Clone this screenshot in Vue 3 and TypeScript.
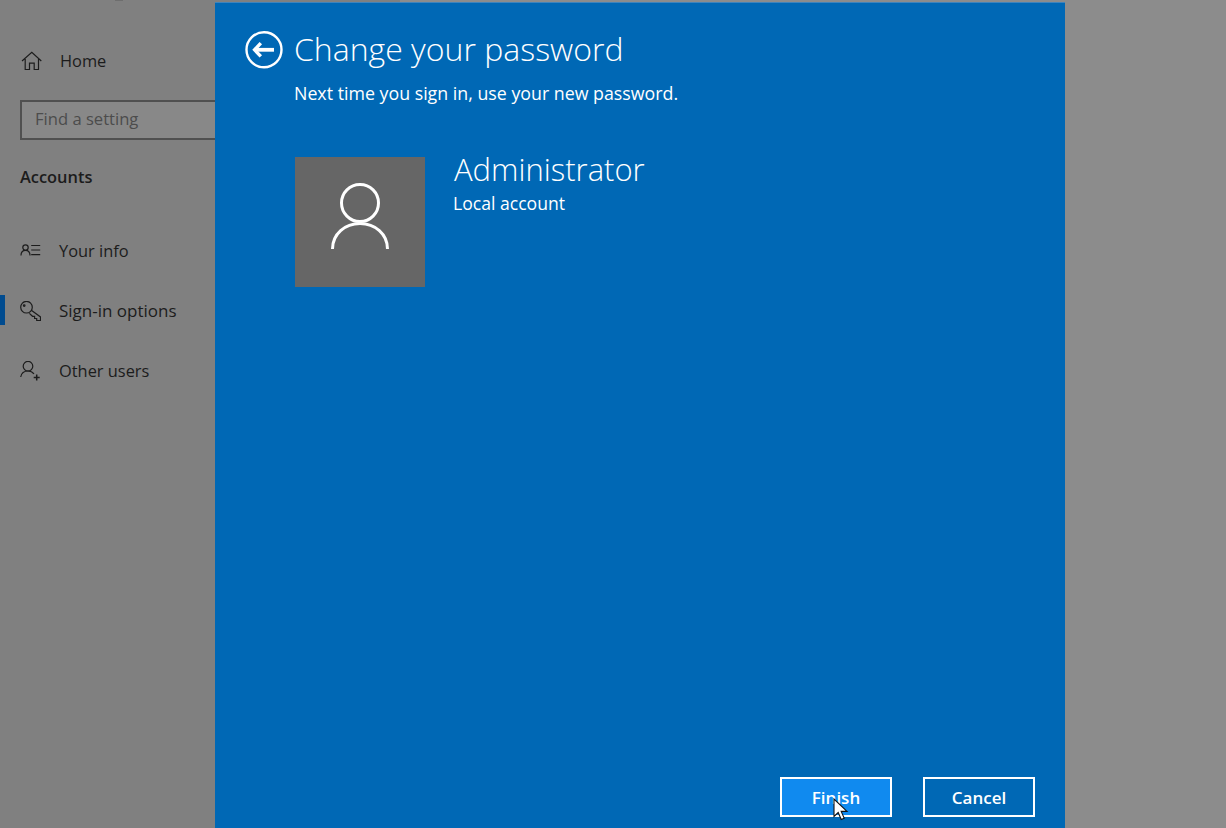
<script setup lang="ts">
const items = [
  { id: 'info', label: 'Your info', active: false },
  { id: 'key', label: 'Sign-in options', active: true },
  { id: 'add', label: 'Other users', active: false },
]
</script>

<template>
  <div class="page">
    <aside class="side">
      <span class="speck"></span>
      <div class="home">
        <svg class="ico" width="21" height="20" viewBox="0 0 21 20" fill="none" stroke="#1c1c1c" stroke-width="1.2">
          <path d="M1 10 10.8 1.3 20.3 10M4.2 8v10.5h4.3V12.2h4.7v6.3h4.3V8" />
        </svg>
        <span class="label">Home</span>
      </div>
      <div class="search">Find a setting</div>
      <div class="heading">Accounts</div>
      <nav class="nav">
        <div v-for="item in items" :key="item.id" class="row" :class="{ active: item.active }">
          <span v-if="item.active" class="mark"></span>
          <svg v-if="item.id === 'info'" class="ico" width="21" height="20" viewBox="0 0 21 20" fill="none" stroke="#1c1c1c" stroke-width="1.2">
            <circle cx="5.5" cy="6.6" r="2.7" />
            <path d="M1 14.4c0-3.6 2-5.1 4.5-5.1s4.5 1.5 4.5 5.1M11.2 4.5h9M11.2 9h9M11.2 13.6h9" />
          </svg>
          <svg v-else-if="item.id === 'key'" class="ico" width="21" height="21" viewBox="0 0 21 21" fill="none" stroke="#1c1c1c" stroke-width="1.2">
            <circle cx="6.5" cy="6.2" r="5.8" />
            <circle cx="4.2" cy="4.6" r=".8" />
            <path d="m11.3 9.3 9.2 6.6v3.6h-3.8v-2h-2.1v-2.2h-2.1l-3.1-2.9" />
          </svg>
          <svg v-else class="ico" width="21" height="21" viewBox="0 0 21 21" fill="none" stroke="#1c1c1c" stroke-width="1.2">
            <circle cx="8" cy="5.2" r="4.8" />
            <path d="M.7 16C1.4 12.2 4 10 8 10c2.5 0 4.5 1 6 3" />
            <path d="M16.7 13.6v6M13.7 16.6h6" stroke-width="1.5" />
          </svg>
          <span class="label">{{ item.label }}</span>
        </div>
      </nav>
    </aside>

    <main class="dialog">
      <header class="head">
        <svg class="back" width="38" height="38" viewBox="0 0 38 38" fill="none">
          <circle cx="19" cy="18.8" r="17.5" stroke="#fff" stroke-width="2.4" />
          <path d="M29 18.8H11" stroke="#fff" stroke-width="3.8" />
          <path d="M15.8 12.2 9.6 18.8l6.2 6.6" stroke="#fff" stroke-width="3.4" />
        </svg>
        <div>
          <h1>Change your password</h1>
          <p class="sub">Next time you sign in, use your new password.</p>
        </div>
      </header>

      <section class="account">
        <div class="avatar">
          <svg width="60" height="66" viewBox="0 0 60 66" fill="none" stroke="#fff" stroke-width="3">
            <circle cx="30" cy="20" r="18.5" />
            <path d="M2.5 66C2.5 51 15 40.5 30 40.5S57.5 51 57.5 66" />
          </svg>
        </div>
        <div class="who">
          <div class="name">Administrator</div>
          <div class="type">Local account</div>
        </div>
      </section>

      <footer class="actions">
        <button class="btn hover" type="button">Finish</button>
        <button class="btn" type="button">Cancel</button>
        <svg class="cursor" width="16" height="24" viewBox="0 0 16 24">
          <path d="M1 1v17.5l4.2-4 3 7 3-1.3-3-6.8h5.8Z" fill="#fff" stroke="#111" stroke-width="1.1" />
        </svg>
      </footer>
    </main>
  </div>
</template>

<style>
html, body { margin: 0; overflow: hidden; background: #8c8c8c; }
</style>

<style scoped>
.page {
  position: relative;
  width: 1226px;
  height: 828px;
  overflow: hidden;
  background: #8c8c8c;
  font-family: "Open Sans", "Noto Sans", sans-serif;
}
.side {
  position: relative;
  width: 400px;
  height: 100%;
  background: #808080;
  color: #1c1c1c;
  font-size: 16.4px;
  display: flex;
  flex-direction: column;
  box-sizing: border-box;
  padding-top: 50px;
}
.speck {
  position: absolute;
  left: 115px;
  top: 0;
  width: 8px;
  height: 1px;
  background: #6e6e6e;
}
.label { margin-bottom: 2px; }
.home {
  display: flex;
  align-items: center;
  gap: 18px;
  padding-left: 21px;
  height: 22px;
}
.search {
  margin: 28px 20px 0;
  height: 40px;
  box-sizing: border-box;
  border: 2px solid #505050;
  background: #888;
  color: #4c4c4c;
  padding-left: 13px;
  line-height: 33px;
  font-size: 16.6px;
}
.heading {
  margin: 26px 0 0 20px;
  font-weight: 600;
  line-height: 22px;
}
.nav {
  margin-top: 33px;
  display: flex;
  flex-direction: column;
}
.row {
  position: relative;
  height: 60px;
  display: flex;
  align-items: center;
  gap: 18px;
  padding-left: 20px;
  box-sizing: border-box;
}
.row.active { font-size: 17px; }
.mark {
  position: absolute;
  left: 0;
  top: 14px;
  width: 5px;
  height: 30px;
  background: #004b8f;
}
.ico { flex: none; }
.dialog {
  position: absolute;
  left: 215px;
  top: 2px;
  bottom: 0;
  width: 850px;
  background: #0068b5;
  border-top: 1px solid #3f84bd;
  color: #fff;
  box-sizing: border-box;
  padding: 27px 30px 0;
  display: flex;
  flex-direction: column;
}
.head {
  display: flex;
  gap: 11px;
}
.back { flex: none; margin-top: 1px; }
h1 {
  margin: 0;
  font-size: 32px;
  font-weight: 300;
  line-height: 38px;
}
.sub {
  margin: 13px 0 0;
  font-size: 17.8px;
  line-height: 24px;
}
.account {
  display: flex;
  margin: 52px 0 0 50px;
}
.avatar {
  width: 130px;
  height: 130px;
  background: #666;
  display: flex;
  align-items: center;
  justify-content: center;
}
.avatar svg { margin-bottom: 12px; }
.who { margin-left: 28px; }
.name {
  font-size: 31px;
  font-weight: 300;
  line-height: 40px;
  margin: -8px 0 0 1px;
}
.type {
  font-size: 17.6px;
  line-height: 24px;
  margin-top: 2px;
}
.actions {
  position: relative;
  margin-top: auto;
  display: flex;
  justify-content: flex-end;
  gap: 31px;
  padding-bottom: 11px;
}
.btn {
  width: 112px;
  height: 40px;
  box-sizing: border-box;
  border: 2px solid #fff;
  background: #0068b5;
  color: #fff;
  font: 600 17px "Open Sans", "Noto Sans", sans-serif;
  padding: 0;
}
.hover { background: #108aef; }
.cursor {
  position: absolute;
  right: 186px;
  bottom: 6px;
}
</style>
